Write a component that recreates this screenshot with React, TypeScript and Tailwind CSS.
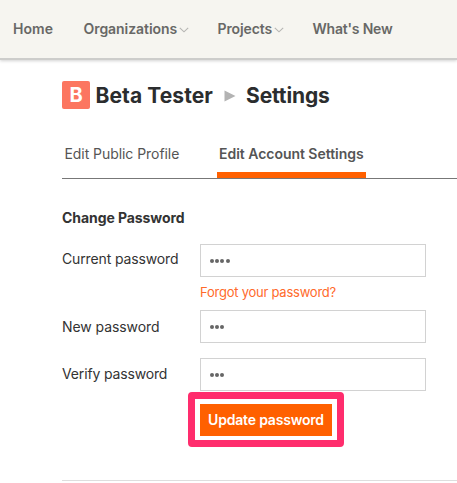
import React from "react";

function Caret() {
  return (
    <svg width="10" height="6" viewBox="0 0 10 6" fill="none" className="mt-[1px] ml-[2px] shrink-0">
      <path d="M0.8 0.8L5 4.8L9.2 0.8" stroke="#b5b5b2" strokeWidth="1.1" />
    </svg>
  );
}

function Dots({ count }: { count: number }) {
  return (
    <span className="flex gap-[1.2px]">
      {Array.from({ length: count }, (_, i) => (
        <span key={i} className="size-[4px] rounded-full bg-[#666]" />
      ))}
    </span>
  );
}

function Field({ count }: { count: number }) {
  return (
    <div className="flex h-[33px] w-[226px] items-center border border-[#d2d2d2] bg-white pt-[1px] pl-[9px]">
      <Dots count={count} />
    </div>
  );
}

export default function App() {
  return (
    <div className="h-[483px] w-[457px] overflow-hidden bg-white font-['Inter',sans-serif] text-[14px] leading-5 whitespace-nowrap text-[#333]">
      <header className="h-[60px] border-b-2 border-[#cdcdcb] bg-[#f6f5f0] shadow-[0_1px_3px_rgba(0,0,0,0.18)]">
        <nav className="flex h-[58px] items-center pl-[13px] font-semibold text-[#686866]">
          <a className="w-[70.5px] tracking-[0.05px]">Home</a>
          <a className="flex w-[134px] items-center tracking-[-0.05px]">Organizations<Caret /></a>
          <a className="flex w-[95px] items-center tracking-[-0.1px]">Projects<Caret /></a>
          <a className="tracking-[-0.2px]">What's New</a>
        </nav>
      </header>
      <main className="pl-[62px]">
        <h1 className="flex h-[70px] items-center text-[21px] font-bold text-[#2b2d2e]">
          <span className="flex size-[28px] items-center justify-center rounded-[2px] bg-[#fc7660] text-[20px] font-bold text-white">B</span>
          <span className="ml-[5.5px] w-[128px] pt-[2px] tracking-[0.08px]">Beta Tester</span>
          <svg width="12" height="12" viewBox="0 0 12 12" className="mt-[1px] mr-[10.5px]">
            <path d="M0.5 0.5L11.5 6L0.5 11.5Z" fill="#b3b3b3" />
          </svg>
          <span className="pt-[2px] tracking-[-0.12px]">Settings</span>
        </h1>
        <div className="flex h-[49px] border-b border-[#777] text-[#555]">
          <a className="w-[154.5px] pt-[14px] pl-[2.5px] tracking-[-0.06px]">Edit Public Profile</a>
          <a className="w-[149px] border-b-[6px] border-[#ff6000] pt-[14px] pl-[2.5px] font-semibold tracking-[-0.03px]">Edit Account Settings</a>
        </div>
        <h2 className="mt-[29px] text-[14px] font-bold tracking-[-0.07px]">Change Password</h2>
        <form>
          <div className="mt-4 flex">
            <label className="w-[138px] pt-[5px] tracking-[-0.13px]">Current password</label>
            <div>
              <Field count={4} />
              <a className="mt-[5px] block text-[13px] tracking-[-0.24px] text-[#ff6a2b]">Forgot your password?</a>
            </div>
          </div>
          <div className="mt-[8px] flex">
            <label className="w-[138px] pt-[7px] tracking-[-0.08px]">New password</label>
            <Field count={3} />
          </div>
          <div className="mt-[15px] flex">
            <label className="w-[138px] pt-[6px] tracking-[-0.15px]">Verify password</label>
            <Field count={3} />
          </div>
          <div className="relative mt-[13px] ml-[138px] h-[32px] w-[132px]">
            <button type="button" className="h-[32px] w-[132px] bg-[#ff6000] text-center font-semibold tracking-[-0.2px] text-white">Update password</button>
            <div className="pointer-events-none absolute -top-[12px] -left-[12px] h-[55px] w-[156px] rounded-[4px] border-[7px] border-[#ff2d6d]" />
          </div>
        </form>
        <hr className="mt-[44px] border-[#dedede]" />
      </main>
    </div>
  );
}
